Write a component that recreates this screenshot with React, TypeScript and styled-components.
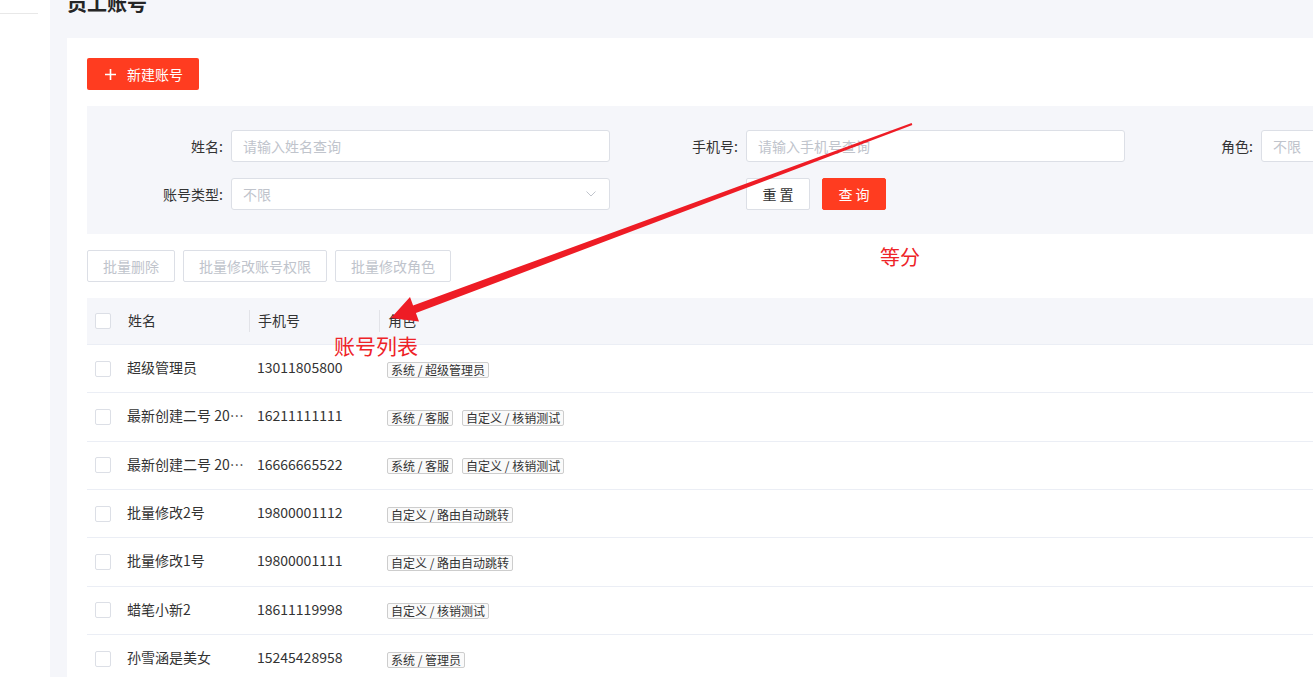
import React from "react";
import styled, { createGlobalStyle } from "styled-components";

const GlobalStyle = createGlobalStyle`
  html, body { margin: 0; padding: 0; background: #fff; }
  body {
    font-family: "Noto Sans CJK SC", "Liberation Sans", sans-serif;
    color: #333;
    overflow: hidden;
  }
  * { box-sizing: border-box; }
`;

const Shell = styled.div`
  position: relative;
  display: flex;
  width: 100%;
  height: 677px;
  overflow: hidden;
`;

const Sidebar = styled.aside`
  flex: none;
  width: 50px;
  background: #fff;
  padding-top: 13px;
`;

const SideRule = styled.div`
  width: 38px;
  height: 1px;
  background: #e8e8e8;
`;

const Main = styled.main`
  flex: 1;
  min-width: 0;
  background: #f5f6fa;
  padding-left: 17px;
  overflow: hidden;
`;

const PageTitle = styled.h1`
  margin: -11px 0 21px;
  font-size: 20px;
  line-height: 28px;
  font-weight: 700;
  color: #262626;
`;

const Card = styled.section`
  background: #fff;
  padding: 20px 0 0 20px;
  min-height: 700px;
`;

const PrimaryButton = styled.button`
  display: inline-flex;
  align-items: center;
  gap: 11px;
  height: 32px;
  padding: 0 16px 0 18px;
  border: none;
  border-radius: 2px;
  background: #ff3c20;
  color: #fff;
  font-family: inherit;
  font-size: 14px;
  cursor: pointer;
`;

const FilterPanel = styled.div`
  margin-top: 16px;
  background: #f5f6fa;
  padding: 24px 0 24px 24px;
`;

const FilterGrid = styled.div`
  display: grid;
  grid-template-columns: repeat(3, 499px);
  column-gap: 16px;
  row-gap: 16px;
`;

const Field = styled.div`
  display: flex;
  align-items: center;
`;

const FieldLabel = styled.label`
  flex: none;
  width: 120px;
  padding-right: 8px;
  text-align: right;
  font-size: 14px;
  color: #333;
  white-space: nowrap;
`;

const TextInput = styled.input`
  width: 379px;
  height: 32px;
  padding: 0 11px 1px;
  border: 1px solid #dcdfe6;
  border-radius: 3px;
  background: #fff;
  font-family: inherit;
  font-size: 14px;
  color: #333;
  outline: none;
  &::placeholder { color: #c0c4cc; }
`;

const SelectBox = styled.div`
  display: flex;
  align-items: center;
  justify-content: space-between;
  width: 379px;
  height: 32px;
  padding: 0 13px 1px 11px;
  border: 1px solid #dcdfe6;
  border-radius: 3px;
  background: #fff;
  font-size: 14px;
  color: #c0c4cc;
`;

const ActionGroup = styled.div`
  display: flex;
  gap: 12px;
`;

const QueryButton = styled.button<{ $primary?: boolean }>`
  width: 64px;
  height: 32px;
  border-radius: 2px;
  border: 1px solid ${(p) => (p.$primary ? "#ff3c20" : "#dcdfe6")};
  background: ${(p) => (p.$primary ? "#ff3c20" : "#fff")};
  color: ${(p) => (p.$primary ? "#fff" : "#333")};
  font-family: inherit;
  font-size: 14px;
  white-space: pre;
  cursor: pointer;
`;

const BatchBar = styled.div`
  display: flex;
  gap: 8px;
  margin-top: 16px;
`;

const BatchButton = styled.button`
  height: 32px;
  padding: 0 15px;
  border: 1px solid #dcdfe6;
  border-radius: 2px;
  background: #fff;
  color: #c0c4cc;
  font-family: inherit;
  font-size: 14px;
  cursor: not-allowed;
`;

const Table = styled.div`
  margin-top: 16px;
`;

const HeaderRow = styled.div`
  display: grid;
  grid-template-columns: 32px 130px 130px 1fr;
  align-items: center;
  height: 47px;
  background: #f5f6fa;
  border-bottom: 1px solid #ebeef5;
`;

const HeadCell = styled.div<{ $divider?: boolean }>`
  display: flex;
  align-items: center;
  height: 22px;
  padding: 0 8px 2px;
  border-left: 1px solid ${(p) => (p.$divider ? "#e2e3e8" : "transparent")};
  font-size: 14px;
  color: #333;
  white-space: nowrap;
`;

const BodyRow = styled.div`
  display: grid;
  grid-template-columns: 32px 130px 130px 1fr;
  align-items: center;
  height: 48.33px;
  border-bottom: 1px solid #ebeef5;
`;

const Cell = styled.div<{ $tight?: boolean }>`
  padding: 0 ${(p) => (p.$tight ? "4px" : "8px")} 3px 8px;
  font-size: 14px;
  color: #333;
  white-space: nowrap;
  overflow: hidden;
  text-overflow: ellipsis;
`;

const CheckCell = styled.div`
  display: flex;
  align-items: center;
  padding-left: 8px;
`;

const Checkbox = styled.span`
  display: block;
  width: 16px;
  height: 16px;
  border: 1px solid #dcdfe6;
  border-radius: 2px;
  background: #fff;
`;

const RoleCell = styled.div`
  display: flex;
  align-items: center;
  gap: 9px;
  padding: 2px 8px 0 8px;
`;

const Tag = styled.span`
  display: inline-flex;
  align-items: center;
  height: 16px;
  padding: 0 3px;
  border: 1px solid #cdcdcd;
  border-radius: 2px;
  background: #fafafa;
  font-size: 12px;
  line-height: 14px;
  color: #333;
  white-space: pre;
`;

const Overlay = styled.svg`
  position: absolute;
  left: 0;
  top: 0;
  width: 100%;
  height: 100%;
  pointer-events: none;
`;

const Note = styled.span<{ $x: number; $y: number; $size: number }>`
  position: absolute;
  left: ${(p) => p.$x}px;
  top: ${(p) => p.$y}px;
  font-size: ${(p) => p.$size}px;
  line-height: 1;
  color: #ee2328;
  white-space: nowrap;
  pointer-events: none;
`;

const PlusIcon = () => (
  <svg width="11" height="11" viewBox="0 0 11 11" aria-hidden>
    <path d="M5.5 0v11M0 5.5h11" stroke="#fff" strokeWidth="1.6" />
  </svg>
);

const Chevron = () => (
  <svg width="10" height="6" viewBox="0 0 10 6" aria-hidden>
    <path d="M0.5 0.5L5 5L9.5 0.5" fill="none" stroke="#c0c4cc" strokeWidth="1" />
  </svg>
);

const rows: { name: string; phone: string; roles: string[] }[] = [
  { name: "超级管理员", phone: "13011805800", roles: ["系统 / 超级管理员"] },
  { name: "最新创建二号 2024", phone: "16211111111", roles: ["系统 / 客服", "自定义 / 核销测试"] },
  { name: "最新创建二号 2024", phone: "16666665522", roles: ["系统 / 客服", "自定义 / 核销测试"] },
  { name: "批量修改2号", phone: "19800001112", roles: ["自定义 / 路由自动跳转"] },
  { name: "批量修改1号", phone: "19800001111", roles: ["自定义 / 路由自动跳转"] },
  { name: "蜡笔小新2", phone: "18611119998", roles: ["自定义 / 核销测试"] },
  { name: "孙雪涵是美女", phone: "15245428958", roles: ["系统 / 管理员"] },
];

export default function App() {
  return (
    <>
      <GlobalStyle />
      <Shell>
        <Sidebar>
          <SideRule />
        </Sidebar>
        <Main>
          <PageTitle>员工账号</PageTitle>
          <Card>
            <PrimaryButton>
              <PlusIcon />
              新建账号
            </PrimaryButton>
            <FilterPanel>
              <FilterGrid>
                <Field>
                  <FieldLabel>姓名:</FieldLabel>
                  <TextInput placeholder="请输入姓名查询" />
                </Field>
                <Field>
                  <FieldLabel>手机号:</FieldLabel>
                  <TextInput placeholder="请输入手机号查询" />
                </Field>
                <Field>
                  <FieldLabel>角色:</FieldLabel>
                  <SelectBox>
                    <span>不限</span>
                    <Chevron />
                  </SelectBox>
                </Field>
                <Field>
                  <FieldLabel>账号类型:</FieldLabel>
                  <SelectBox>
                    <span>不限</span>
                    <Chevron />
                  </SelectBox>
                </Field>
                <Field>
                  <FieldLabel />
                  <ActionGroup>
                    <QueryButton>重 置</QueryButton>
                    <QueryButton $primary>查 询</QueryButton>
                  </ActionGroup>
                </Field>
              </FilterGrid>
            </FilterPanel>
            <BatchBar>
              <BatchButton>批量删除</BatchButton>
              <BatchButton>批量修改账号权限</BatchButton>
              <BatchButton>批量修改角色</BatchButton>
            </BatchBar>
            <Table>
              <HeaderRow>
                <CheckCell>
                  <Checkbox />
                </CheckCell>
                <HeadCell>姓名</HeadCell>
                <HeadCell $divider>手机号</HeadCell>
                <HeadCell $divider>角色</HeadCell>
              </HeaderRow>
              {rows.map((r, i) => (
                <BodyRow key={i}>
                  <CheckCell>
                    <Checkbox />
                  </CheckCell>
                  <Cell $tight>{r.name}</Cell>
                  <Cell>{r.phone}</Cell>
                  <RoleCell>
                    {r.roles.map((t) => (
                      <Tag key={t}>{t}</Tag>
                    ))}
                  </RoleCell>
                </BodyRow>
              ))}
            </Table>
          </Card>
        </Main>
        <Overlay viewBox="0 0 1313 677" preserveAspectRatio="none" aria-hidden>
          <polygon
            points="391,318 410,297.1 413.1,305.6 911.65,123.06 912.35,124.94 415.9,313.05 419,321.5"
            fill="#ee1c25"
          />
        </Overlay>
        <Note $x={880} $y={247} $size={20}>等分</Note>
        <Note $x={334} $y={335} $size={21}>账号列表</Note>
      </Shell>
    </>
  );
}
